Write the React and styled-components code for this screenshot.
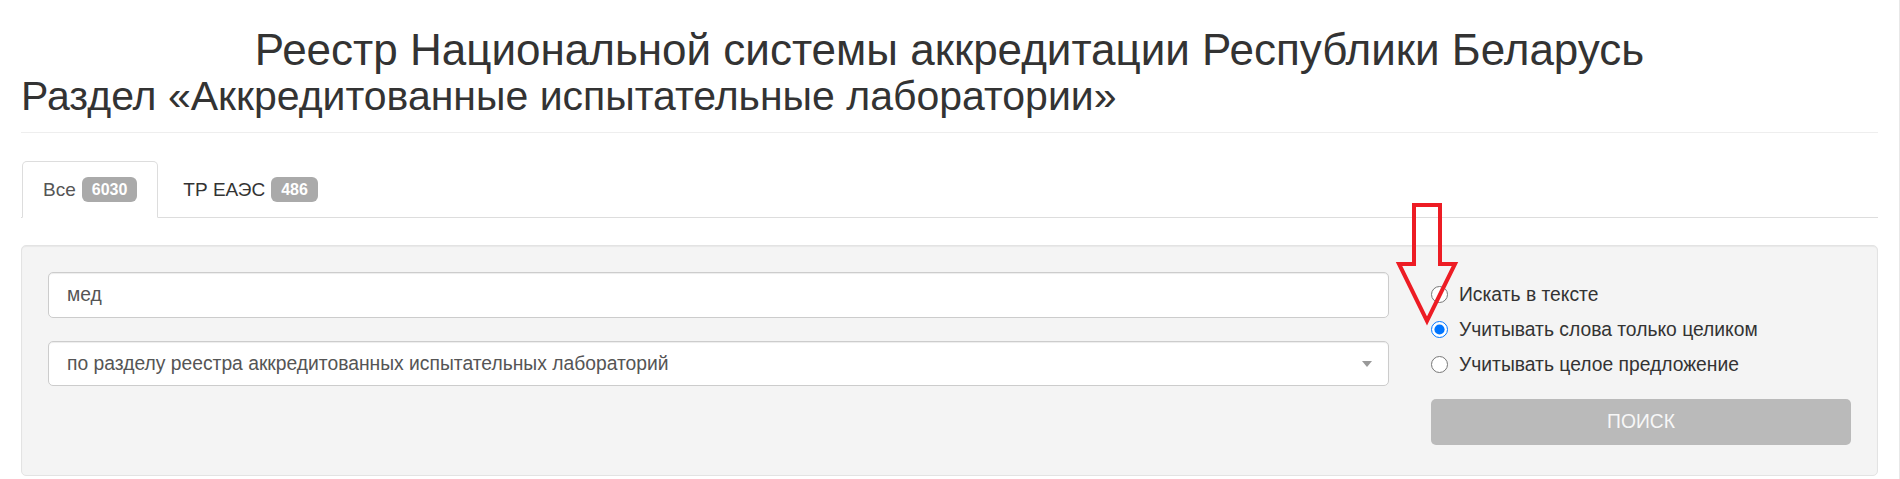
import React from 'react';
import styled, { createGlobalStyle } from 'styled-components';

const GlobalStyle = createGlobalStyle`
    body {
        margin: 0;
        background: #fff;
        color: #333;
        font-family: "Liberation Sans", Arial, sans-serif;
    }
`

const tabs = [
    { label: 'Все', count: 6030, active: true },
    { label: 'ТР ЕАЭС', count: 486 },
]

const modes = [
    { id: 'text', label: 'Искать в тексте' },
    { id: 'words', label: 'Учитывать слова только целиком' },
    { id: 'phrase', label: 'Учитывать целое предложение' },
]

const App = () => {
    const [mode, setMode] = React.useState('words');

    return (
        <Page>
            <GlobalStyle />
            <Title>Реестр Национальной системы аккредитации Республики Беларусь</Title>
            <Subtitle>Раздел «Аккредитованные испытательные лаборатории»</Subtitle>
            <Divider />

            <Tabs>
                {tabs.map((t) => (
                    <Tab key={t.label} active={t.active}>
                        {t.label}
                        <Badge>{t.count}</Badge>
                    </Tab>
                ))}
            </Tabs>

            <Well>
                <Fields>
                    <Input defaultValue='мед' />
                    <Select>
                        <span>по разделу реестра аккредитованных испытательных лабораторий</span>
                        <Caret />
                    </Select>
                </Fields>

                <Options>
                    {modes.map((m) => (
                        <RadioRow key={m.id}>
                            <Radio
                                type='radio'
                                name='mode'
                                checked={mode === m.id}
                                onChange={() => setMode(m.id)}
                            />
                            {m.label}
                        </RadioRow>
                    ))}
                    <SearchButton type='button'>ПОИСК</SearchButton>
                </Options>
            </Well>

            <Arrow width='64' height='126' viewBox='0 0 64 126'>
                <path
                    d='M19 4 L45 4 L45 63 L60 63 L32 120 L4 63 L19 63 Z'
                    fill='none'
                    stroke='#ed1c24'
                    strokeWidth='4'
                    strokeLinejoin='miter'
                />
            </Arrow>
        </Page>
    )
}

const Page = styled.div`
    position: relative;
    padding: 0 21px 0 21px;
    height: 479px;
    box-sizing: border-box;
    overflow: hidden;
    border-right: 1px solid #e8e8e8;
`

const Title = styled.h1`
    margin: 26px 0 0;
    font-size: 44px;
    font-weight: 400;
    line-height: 1.1;
    text-align: center;
    color: #333;
`

const Subtitle = styled.h2`
    margin: 0;
    font-size: 41px;
    font-weight: 400;
    line-height: 1.1;
    color: #333;
`

const Divider = styled.hr`
    margin: 13px 0 0;
    border: 0;
    border-top: 1px solid #eee;
`

const Tabs = styled.ul`
    display: flex;
    margin: 28px 0 0;
    padding: 0 0 0 1px;
    list-style: none;
    border-bottom: 1px solid #ddd;
`

const Tab = styled.li`
    display: flex;
    align-items: center;
    margin: 0 4px -1px 0;
    padding: 15px 20px;
    line-height: 25px;
    font-size: 19px;
    color: ${(p) => (p.active ? '#555' : '#333')};
    background: ${(p) => (p.active ? '#fff' : 'transparent')};
    border: 1px solid ${(p) => (p.active ? '#ddd' : 'transparent')};
    border-bottom-color: transparent;
    border-radius: 5px 5px 0 0;
`

const Badge = styled.span`
    display: inline-block;
    margin-left: 6px;
    padding: 0 10px;
    height: 25px;
    line-height: 25px;
    font-size: 16px;
    font-weight: 700;
    color: #fff;
    background: #aaa;
    border-radius: 6px;
`

const Well = styled.div`
    display: grid;
    grid-template-columns: 1fr 420px;
    column-gap: 42px;
    margin-top: 27px;
    padding: 26px 26px 30px;
    background: #f4f4f4;
    border: 1px solid #e3e3e3;
    border-radius: 5px;
    box-shadow: inset 0 1px 1px rgba(0, 0, 0, .05);
`

const Fields = styled.div`
    display: flex;
    flex-direction: column;
    gap: 23px;
`

const Input = styled.input`
    box-sizing: border-box;
    height: 46px;
    padding: 0 18px;
    font-family: inherit;
    font-size: 19.3px;
    color: #555;
    background: #fff;
    border: 1px solid #ccc;
    border-radius: 5px;
    box-shadow: inset 0 1px 1px rgba(0, 0, 0, .075);
    outline: none;
`

const Select = styled.div`
    display: flex;
    align-items: center;
    justify-content: space-between;
    box-sizing: border-box;
    height: 45px;
    padding: 0 16px 0 18px;
    font-size: 19.3px;
    color: #555;
    background: #fff;
    border: 1px solid #ccc;
    border-radius: 5px;
    box-shadow: inset 0 1px 1px rgba(0, 0, 0, .075);
`

const Caret = styled.span`
    width: 0;
    height: 0;
    border-left: 5px solid transparent;
    border-right: 5px solid transparent;
    border-top: 6px solid #999;
`

const Options = styled.div`
    display: flex;
    flex-direction: column;
    padding-top: 5px;
`

const RadioRow = styled.label`
    display: flex;
    align-items: center;
    gap: 11px;
    height: 35px;
    font-size: 19.3px;
    color: #333;
`

const Radio = styled.input`
    width: 17px;
    height: 17px;
    margin: 0;
    accent-color: #0075ff;
`

const SearchButton = styled.button`
    margin-top: 17px;
    height: 46px;
    font-family: inherit;
    font-size: 19.3px;
    color: #f7f7f7;
    background: #bababa;
    border: 0;
    border-radius: 5px;
`

const Arrow = styled.svg`
    position: absolute;
    left: 1395px;
    top: 201px;
`

export default App;
